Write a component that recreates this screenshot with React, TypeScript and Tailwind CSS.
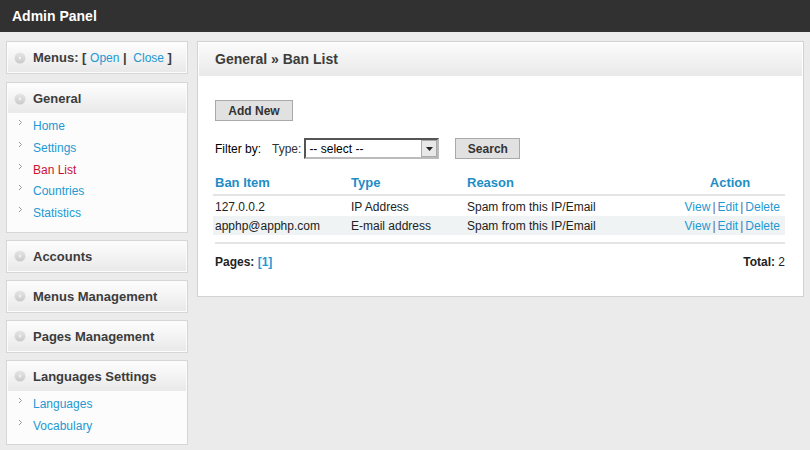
import React from "react";

const Bullet = () => (
  <svg width="12" height="12" viewBox="0 0 12 12" className="shrink-0">
    <defs>
      <linearGradient id="bg" x1="0" y1="0" x2="0" y2="1">
        <stop offset="0" stopColor="#e6e6e6" />
        <stop offset="1" stopColor="#cacaca" />
      </linearGradient>
    </defs>
    <circle cx="6" cy="6" r="5.5" fill="url(#bg)" />
    <path d="M5 4 L7.5 6 L5 8 Z" fill="#f4f4f4" />
  </svg>
);

const Chevron = () => (
  <svg width="5" height="7" viewBox="0 0 5 7" className="shrink-0">
    <path d="M1 1 L3.5 3.5 L1 6" fill="none" stroke="#9a9a9a" strokeWidth="1" />
  </svg>
);

const BoxHead = ({ children }: { children: React.ReactNode }) => (
  <div className="h-[29px] flex items-center gap-[7px] pl-[6px] bg-gradient-to-b from-[#fdfdfd] to-[#e9e9e9] text-[13px] font-bold text-[#3c3c3c]">
    <Bullet />
    {children}
  </div>
);

const SideBox = ({
  title,
  items,
}: {
  title: React.ReactNode;
  items?: { label: string; active?: boolean }[];
}) => (
  <div className="border border-[#d6d6d6] bg-[#fcfcfc] p-px">
    <BoxHead>{title}</BoxHead>
    {items && (
      <ul className="pt-[3px] pb-[6px]">
        {items.map((it) => (
          <li key={it.label} className="flex items-start h-[21.75px] pl-[10px]">
            <span className="mt-[3px]">
              <Chevron />
            </span>
            <a
              className={`ml-[10px] text-[12px] leading-[20px] ${
                it.active ? "text-[#cc1133]" : "text-[#2399d3]"
              }`}
            >
              {it.label}
            </a>
          </li>
        ))}
      </ul>
    )}
  </div>
);

const rows = [
  { item: "127.0.0.2", type: "IP Address", reason: "Spam from this IP/Email" },
  { item: "apphp@apphp.com", type: "E-mail address", reason: "Spam from this IP/Email" },
];

const Actions = () => (
  <span className="text-[#2399d3]">
    View<span className="text-[#666] mx-[2px]">|</span>Edit
    <span className="text-[#666] mx-[2px]">|</span>Delete
  </span>
);

export default function App() {
  return (
    <div
      className="min-h-[450px] bg-[#ebebeb] text-[12px] text-[#222]"
      style={{ fontFamily: '"Liberation Sans", Arial, sans-serif' }}
    >
      <div className="h-[32px] bg-[#313131] flex items-center pl-[12px] text-white font-bold text-[14px]">
        Admin Panel
      </div>

      <div className="flex gap-[9px] px-[6px] pt-[9px]">
        {/* sidebar */}
        <div className="w-[182px] flex flex-col gap-[7px] shrink-0">
          <div className="mb-px">
            <SideBox
              title={
                <span>
                  Menus: [ <a className="font-normal text-[#2399d3] text-[12px]">Open</a> |{" "}
                  <a className="font-normal text-[#2399d3] text-[12px] ml-[3px]">Close</a> ]
                </span>
              }
            />
          </div>
          <SideBox
            title="General"
            items={[
              { label: "Home" },
              { label: "Settings" },
              { label: "Ban List", active: true },
              { label: "Countries" },
              { label: "Statistics" },
            ]}
          />
          <SideBox title="Accounts" />
          <SideBox title="Menus Management" />
          <SideBox title="Pages Management" />
          <SideBox
            title="Languages Settings"
            items={[{ label: "Languages" }, { label: "Vocabulary" }]}
          />
        </div>

        {/* main */}
        <div className="flex-1 self-start border border-[#d2d2d2] bg-white p-px">
          <div className="h-[33px] flex items-center pl-[16px] bg-gradient-to-b from-[#fbfbfb] to-[#e9e9e9] text-[14px] font-bold text-[#3c3c3c]">
            General » Ban List
          </div>

          <div className="px-[14px] pt-[24px] pb-[24px]">
            <button className="ml-[2px] h-[21px] w-[78px] bg-[#e1e1e1] border border-[#a9a9a9] text-[12px] font-bold text-[#333]">
              Add New
            </button>

            <div className="flex items-center mt-[17px] h-[21px] pl-[2px]">
              <span className="text-black">Filter by:</span>
              <span className="ml-[11px] text-[#333]">Type:</span>
              <div className="ml-[3px] w-[135px] h-[21px] border-2 border-t-[#555] border-l-[#555] border-b-[#bbb] border-r-[#bbb] flex items-center bg-white">
                <span className="pl-[3px] flex-1 text-[12px] text-black">-- select --</span>
                <div className="w-[16px] h-[17px] bg-[#e8e8e8] border border-[#aaa] flex items-center justify-center">
                  <svg width="7" height="4" viewBox="0 0 7 4">
                    <path d="M0 0 H7 L3.5 4 Z" fill="#222" />
                  </svg>
                </div>
              </div>
              <button className="ml-[16px] h-[21px] w-[65px] bg-[#e1e1e1] border border-[#a9a9a9] text-[12px] font-bold text-[#333]">
                Search
              </button>
            </div>

            <table className="w-[572px] mt-[13px] border-collapse text-[12px]">
              <thead>
                <tr className="text-[13px] text-[#1e8dc6] font-bold">
                  <th className="text-left font-bold h-[23px] pl-[2px] w-[138px] border-b-2 border-[#e4e4e4]">
                    Ban Item
                  </th>
                  <th className="text-left font-bold w-[116px] border-b-2 border-[#e4e4e4]">Type</th>
                  <th className="text-left font-bold border-b-2 border-[#e4e4e4]">Reason</th>
                  <th className="text-center font-bold w-[110px] border-b-2 border-[#e4e4e4]">
                    Action
                  </th>
                </tr>
              </thead>
              <tbody>
                <tr className="h-[2px]" />
                {rows.map((r, i) => (
                  <tr key={r.item} className={i % 2 ? "bg-[#eff3f4]" : ""}>
                    <td className="h-[19px] pl-[2px]">{r.item}</td>
                    <td>{r.type}</td>
                    <td>{r.reason}</td>
                    <td className="text-right pr-[5px]">
                      <Actions />
                    </td>
                  </tr>
                ))}
              </tbody>
            </table>

            <div className="ml-[2px] w-[570px] border-t-2 border-[#e4e4e4] mt-[7px] pt-[9px] flex justify-between">
              <span className="font-bold text-[#222]">
                Pages: <span className="text-[#2399d3]">[1]</span>
              </span>
              <span className="text-[#222]">
                <b>Total:</b> 2
              </span>
            </div>
          </div>
        </div>
      </div>
    </div>
  );
}
